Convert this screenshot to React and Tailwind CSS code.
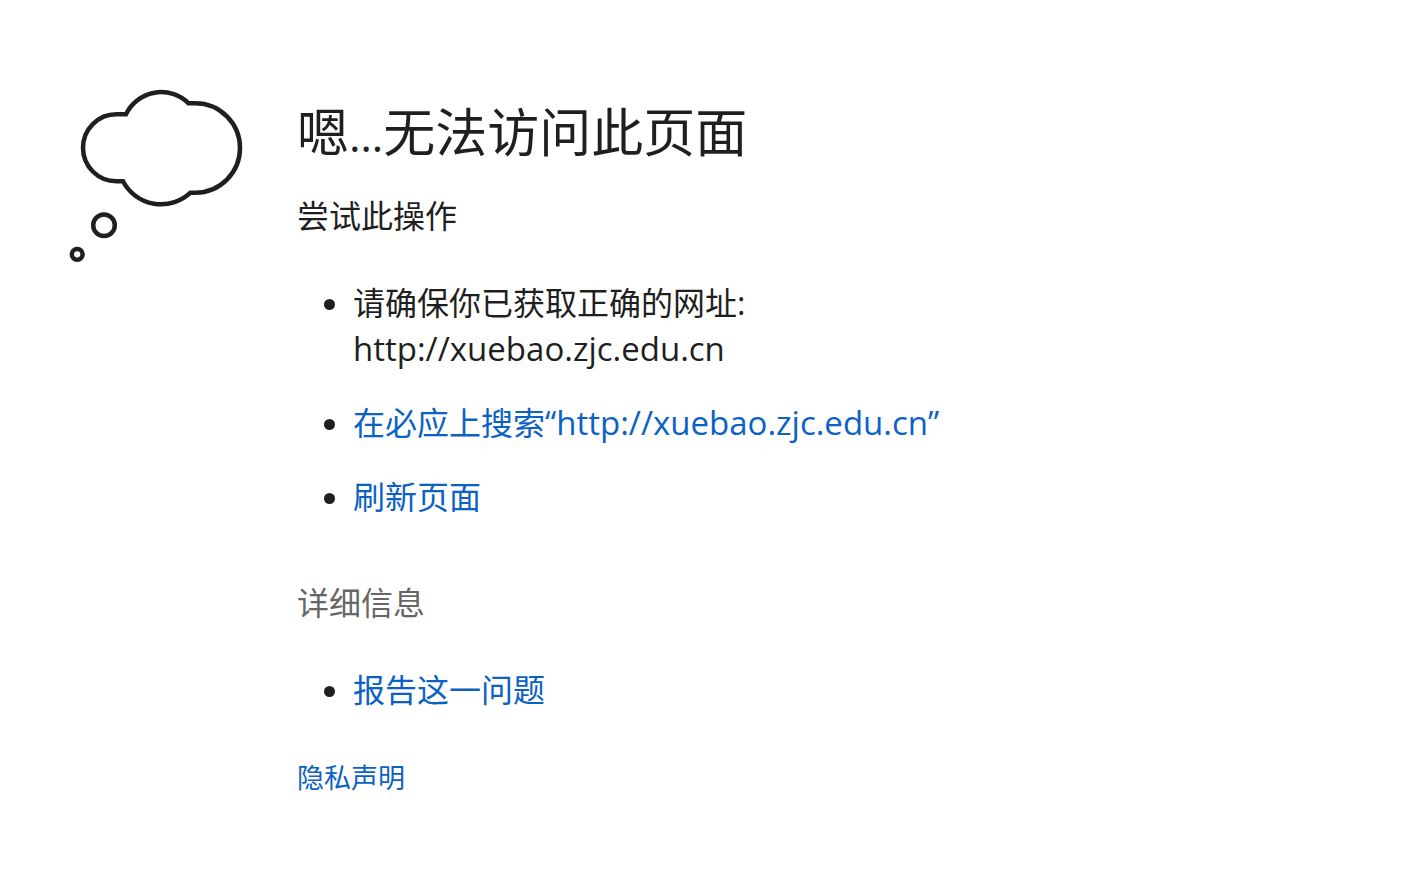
const SITE_URL = 'http://xuebao.zjc.edu.cn'

function ThoughtCloud() {
    return (
        <svg
            viewBox="0 0 176 176"
            fill="none"
            stroke="currentColor"
            strokeWidth="4.5"
            className="w-44 h-44 shrink-0"
            aria-hidden="true"
        >
            <path d="M48.5 26.3H58A39 39 0 0 1 120.5 15.3H127.3A44.7 44.7 0 0 1 127.3 104.7H122.5A43 43 0 0 1 55 93.3H48.5A33.5 33.5 0 0 1 48.5 26.3Z" />
            <circle cx="36" cy="137.3" r="10.8" />
            <circle cx="9.2" cy="166.3" r="5.4" />
        </svg>
    )
}

function TextLink({ children }) {
    return (
        <a href="#" className="text-[#0b62c4] hover:underline">
            {children}
        </a>
    )
}

function SiteUrl() {
    return <span className="text-[33px] leading-none">{SITE_URL}</span>
}

export default function App() {
    return (
        <main
            lang="zh-CN"
            className="min-h-screen bg-white pl-17 pr-8 pt-22 pb-16 flex items-start gap-[53px] text-[#1f1f1f] text-[32px] leading-[46px] font-['Open_Sans','Noto_Sans_CJK_SC',sans-serif]"
        >
            <ThoughtCloud />

            <div className="flex-1 min-w-0">
                <h1 className="mt-3 text-[52px] leading-[64px]">
                    嗯<span className="text-[44px] leading-none">…</span>无法访问此页面
                </h1>

                {/* Suggestions */}
                <h2 className="mt-[29px]">尝试此操作</h2>
                <ul className="mt-[41px] pl-14 list-disc space-y-7">
                    <li>
                        请确保你已获取正确的网址:
                        <br />
                        <SiteUrl />
                    </li>
                    <li>
                        <TextLink>
                            在必应上搜索“<SiteUrl />”
                        </TextLink>
                    </li>
                    <li>
                        <TextLink>刷新页面</TextLink>
                    </li>
                </ul>

                {/* Details */}
                <h2 className="mt-15 text-[#666666]">详细信息</h2>
                <ul className="mt-[41px] pl-14 list-disc">
                    <li>
                        <TextLink>报告这一问题</TextLink>
                    </li>
                </ul>

                <p className="mt-11 text-[27px] leading-[42px]">
                    <TextLink>隐私声明</TextLink>
                </p>
            </div>
        </main>
    )
}
